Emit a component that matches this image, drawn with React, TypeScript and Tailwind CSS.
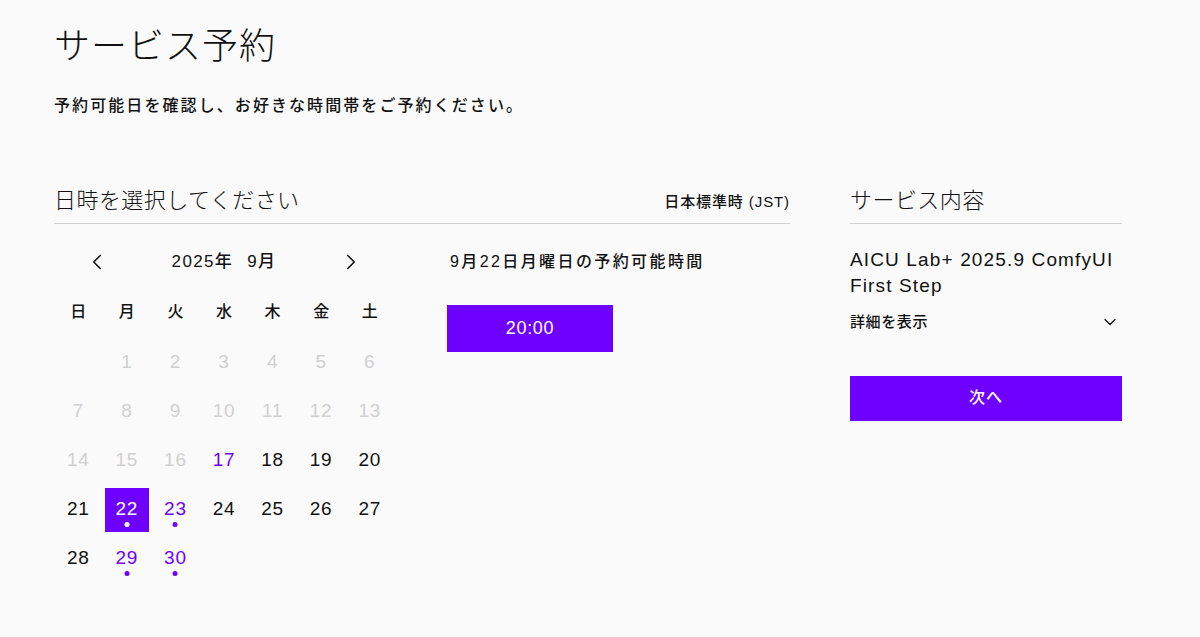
import { ChevronDown, ChevronLeft, ChevronRight } from "lucide-react";

const font = { fontFamily: '"Liberation Sans", "Noto Sans CJK JP", sans-serif' };

type Day = { d: number; state: "past" | "open" | "avail" | "selected" };

const days: (Day | null)[] = [
  null,
  ...[1, 2, 3, 4, 5, 6, 7, 8, 9, 10, 11, 12, 13, 14, 15, 16].map((d) => ({ d, state: "past" as const })),
  { d: 17, state: "avail" },
  { d: 18, state: "open" },
  { d: 19, state: "open" },
  { d: 20, state: "open" },
  { d: 21, state: "open" },
  { d: 22, state: "selected" },
  { d: 23, state: "avail" },
  { d: 24, state: "open" },
  { d: 25, state: "open" },
  { d: 26, state: "open" },
  { d: 27, state: "open" },
  { d: 28, state: "open" },
  { d: 29, state: "avail" },
  { d: 30, state: "avail" },
];

const dotted = new Set([22, 23, 29, 30]);

function DayCell({ day }: { day: Day | null }) {
  if (!day) return <div className="h-[49px]" />;
  const color =
    day.state === "past"
      ? "text-[#d0d0d0]"
      : day.state === "avail"
        ? "text-[#6e00ff]"
        : day.state === "selected"
          ? "text-white"
          : "text-[#111]";
  return (
    <div className="flex h-[49px] items-center justify-center">
      <div
        className={`relative flex h-[44px] w-[44px] items-center justify-center text-[19px] tracking-[0.04em] ${color} ${
          day.state === "selected" ? "bg-[#6e00ff]" : ""
        }`}
      >
        {day.d}
        {dotted.has(day.d) && (
          <span
            className={`absolute bottom-[5px] left-1/2 h-[5px] w-[5px] -translate-x-1/2 rounded-full ${
              day.state === "selected" ? "bg-white" : "bg-[#6e00ff]"
            }`}
          />
        )}
      </div>
    </div>
  );
}

export default function App() {
  return (
    <div className="min-h-[637px] bg-[#fafafa] px-[54px] pt-[24px] text-[#111]" style={font}>
      <h1 className="text-[36px] font-light leading-[46px] tracking-[1px]">サービス予約</h1>
      <p className="mt-[24px] text-[16px] font-medium leading-[24px] tracking-[0.13em]">
        予約可能日を確認し、お好きな時間帯をご予約ください。
      </p>

      <div className="mt-[67px] flex gap-[60px]">
        <div className="w-[736px]">
          <div className="flex items-end justify-between border-b border-[#cfcfcf] pb-[6px]">
            <h2 className="text-[22px] font-light leading-[32px] tracking-[0.02em]">日時を選択してください</h2>
            <span className="pb-[4px] text-[15px] font-medium tracking-[0.06em]">日本標準時 (JST)</span>
          </div>

          <div className="mt-[22px] flex">
            <div className="w-[340px]">
              <div className="flex h-[32px] items-center justify-center gap-[62px]">
                <ChevronLeft className="h-[26px] w-[26px]" strokeWidth={1.5} />
                <div className="text-[17px] font-medium tracking-[0.08em]">
                  2025年<span className="ml-[14px]">9月</span>
                </div>
                <ChevronRight className="h-[26px] w-[26px]" strokeWidth={1.5} />
              </div>
              <div className="mt-[16px] grid grid-cols-7">
                {["日", "月", "火", "水", "木", "金", "土"].map((w) => (
                  <div key={w} className="flex h-[36px] items-center justify-center text-[16px] font-medium">
                    {w}
                  </div>
                ))}
              </div>
              <div className="mt-[8px] grid grid-cols-7">
                {days.map((day, i) => (
                  <DayCell key={i} day={day} />
                ))}
              </div>
            </div>

            <div className="ml-[53px]">
              <p className="flex h-[32px] items-center pl-[3px] text-[16px] font-medium tracking-[0.15em]">
                9月22日月曜日の予約可能時間
              </p>
              <button className="mt-[27px] h-[47px] w-[166px] bg-[#6e00ff] text-[18px] tracking-[0.04em] text-white">
                20:00
              </button>
            </div>
          </div>
        </div>

        <div className="w-[272px]">
          <div className="border-b border-[#cfcfcf] pb-[6px]">
            <h2 className="text-[22px] font-light leading-[32px] tracking-[0.02em]">サービス内容</h2>
          </div>
          <p className="mt-[23px] text-[19px] leading-[26px] tracking-[0.06em]">AICU Lab+ 2025.9 ComfyUI First Step</p>
          <div className="mt-[12px] flex items-center justify-between">
            <span className="text-[15px] font-medium tracking-[0.04em]">詳細を表示</span>
            <ChevronDown className="mr-[2px] h-[20px] w-[20px]" strokeWidth={1.5} />
          </div>
          <button className="mt-[42px] h-[45px] w-full bg-[#6e00ff] text-[16px] font-medium tracking-[0.06em] text-white">
            次へ
          </button>
        </div>
      </div>
    </div>
  );
}
